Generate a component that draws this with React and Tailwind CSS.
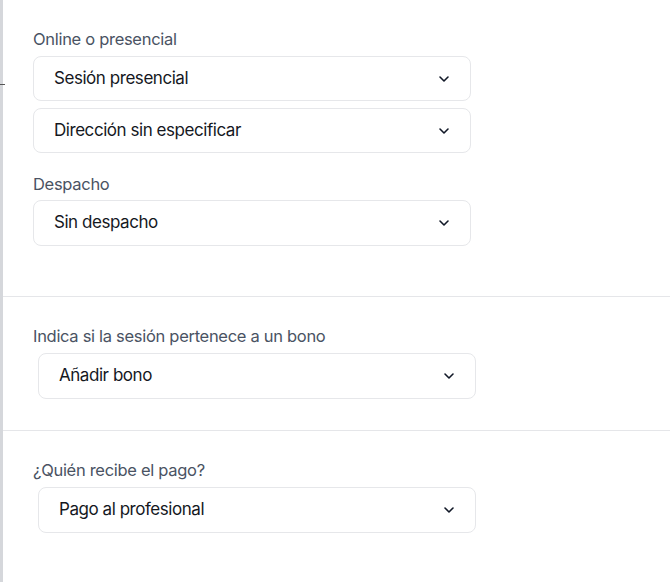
import React from "react";

function Chevron() {
  return (
    <svg width="16" height="16" viewBox="0 0 24 24" fill="none" stroke="#111827" strokeWidth="2.4" strokeLinecap="round" strokeLinejoin="round">
      <path d="M6 9l6 6 6-6" />
    </svg>
  );
}

function Select({ text, className = "" }) {
  return (
    <div className={`flex w-[438px] items-center justify-between rounded-lg border border-[#e6e7ea] bg-white pl-5 pr-[18px] ${className}`}>
      <span className="text-[17px] tracking-[-0.45px] text-[#15181e]">{text}</span>
      <Chevron />
    </div>
  );
}

function Label({ children }) {
  return <div className="h-6 text-[16.5px] leading-6 tracking-[-0.3px] text-[#4a5363]">{children}</div>;
}

export default function App() {
  return (
    <div className="flex h-[582px] w-[670px] overflow-hidden bg-white" style={{ fontFamily: "Inter, 'Noto Sans', sans-serif" }}>
      <div className="relative w-[3px] shrink-0 bg-[#d5d7db]">
        <div className="absolute left-0 top-[84px] h-px w-[5px] bg-[#555]" />
      </div>
      <div className="flex flex-1 flex-col">
        <div className="flex flex-col pl-[30px] pt-[27px]">
          <Label>Online o presencial</Label>
          <Select text="Sesión presencial" className="mt-[5px] h-[45px]" />
          <Select text="Dirección sin especificar" className="mt-[7px] h-[45px]" />
          <div className="mt-[19px]">
            <Label>Despacho</Label>
          </div>
          <Select text="Sin despacho" className="mt-[4px] h-[46px]" />
        </div>
        <div className="mt-[50px] h-px bg-[#e5e6e9]" />
        <div className="flex flex-col pl-[30px] pt-[27px]">
          <Label>Indica si la sesión pertenece a un bono</Label>
          <Select text="Añadir bono" className="ml-[5px] mt-[5px] h-[46px]" />
        </div>
        <div className="mt-[31px] h-px bg-[#e5e6e9]" />
        <div className="flex flex-col pl-[30px] pt-[27px]">
          <Label>¿Quién recibe el pago?</Label>
          <Select text="Pago al profesional" className="ml-[5px] mt-[5px] h-[46px]" />
        </div>
      </div>
    </div>
  );
}
